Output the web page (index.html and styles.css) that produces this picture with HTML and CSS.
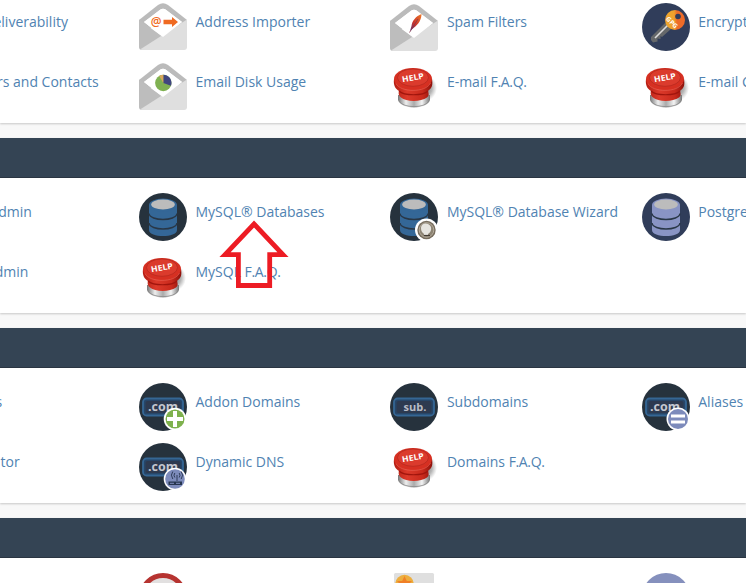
FILE: index.html
```html
<!DOCTYPE html>
<html lang="en">
<head>
<meta charset="utf-8">
<title>cPanel</title>
<link rel="stylesheet" href="styles.css">
</head>
<body>
<svg class="defs" aria-hidden="true">
  <defs>
    <linearGradient id="red" x1="0" x2="1"><stop offset="0" stop-color="#b51d12"/><stop offset=".35" stop-color="#dc3a2b"/><stop offset=".75" stop-color="#c92a1c"/><stop offset="1" stop-color="#8d120c"/></linearGradient>
    <linearGradient id="metal" x1="0" x2="1"><stop offset="0" stop-color="#777"/><stop offset=".25" stop-color="#eee"/><stop offset=".5" stop-color="#aaa"/><stop offset=".75" stop-color="#f4f4f4"/><stop offset="1" stop-color="#777"/></linearGradient>
    <radialGradient id="shade"><stop offset="0" stop-color="#666" stop-opacity=".9"/><stop offset=".6" stop-color="#888" stop-opacity=".6"/><stop offset="1" stop-color="#999" stop-opacity="0"/></radialGradient>
    <linearGradient id="key" x1="0" x2="1"><stop offset="0" stop-color="#eda62f"/><stop offset=".45" stop-color="#eea22d"/><stop offset=".6" stop-color="#ed6b28"/><stop offset="1" stop-color="#ed6b28"/></linearGradient>
    <linearGradient id="feather" x1="0" y1="1" x2="1" y2="0"><stop offset="0" stop-color="#4e3a80"/><stop offset=".4" stop-color="#c8322c"/><stop offset="1" stop-color="#ee7a28"/></linearGradient>
  </defs>
  <symbol id="envelope" viewBox="0 0 48 48">
    <path d="M0 17 19 2Q24-1.5 29 2L48 17V25H0Z" fill="#bbb"/>
    <path d="M5 19 21.5 6.5Q24 4.8 26.5 6.5L43 19 24 34Z" fill="#fff"/>
    <path d="M0 16.5 24 34 6 47H3Q0 47 0 44Z" fill="#bdbdbd"/>
    <path d="M48 16.5V44Q48 47 45 47H3L1 46.5Z" fill="#dfdfdf"/>
    <path d="M5 19 21.5 6.5Q24 4.8 26.5 6.5L43 19 24 34Z" fill="#fff"/>
  </symbol>
  <symbol id="help" viewBox="0 0 48 48">
    <ellipse cx="35" cy="25" rx="12" ry="13" fill="url(#shade)"/>
    <path d="M8 32H40V37C37 47 11 47 8 37Z" fill="url(#metal)"/>
    <path d="M9 38C13 45.5 35 45.5 39 38" fill="none" stroke="#888" stroke-width=".8"/>
    <path d="M4 16C3 23 6 26 9 28 8 31 9 33 11 34.5 16 39 31 39 37 34.5 39 33 39 31 38 28 42 25 43 22 42 16Z" fill="url(#red)"/>
    <path d="M9 28C14 33 33 33 38 28" fill="none" stroke="#a0150d" stroke-width="1.2"/>
    <ellipse cx="23" cy="16" rx="19" ry="11" fill="#d63022"/>
    <ellipse cx="23" cy="14.6" rx="15.5" ry="8.7" fill="#db3b2d" stroke="#b82a20" stroke-width=".8"/>
    <path d="M6 20.5C10 29.5 36 30 40.5 20" fill="none" stroke="#ed6557" stroke-width="1" opacity=".6"/>
    <text x="23" y="17.5" class="t-help" textLength="22" lengthAdjust="spacingAndGlyphs" transform="rotate(-10 23 15)">HELP</text>
  </symbol>
  <symbol id="cylinder" viewBox="0 0 48 48">
    <path d="M10 12V37C10 45 38 45 38 37V12Z" fill="currentColor"/>
    <ellipse cx="24" cy="12" rx="14" ry="6.5" fill="currentColor"/>
    <ellipse cx="24" cy="11.5" rx="11.8" ry="4.9" fill="#bcbcbc"/>
    <path d="M10 20.5C11 28.5 37 28.5 38 20.5M10 30C11 38 37 38 38 30" fill="none" stroke="#293746" stroke-width="1.5"/>
  </symbol>
  <symbol id="domain" viewBox="0 0 48 48">
    <circle cx="24" cy="24" r="24" fill="#26323d"/>
    <rect x="4" y="15.5" width="40" height="17" rx="3.5" fill="#274668" stroke="#356694" stroke-width="1.8"/>
    <rect x="6.5" y="18" width="35" height="12" rx="2" fill="#2d3a50"/>
  </symbol>
</svg>

<main class="page">
  <section class="panel panel-first">
    <ul class="items">
      <li class="item"><svg class="icon"><use href="#envelope"/></svg><a>Email Deliverability</a></li>
      <li class="item">
        <svg class="icon" viewBox="0 0 48 48"><use href="#envelope"/><text x="17.2" y="23" class="t-at">@</text><path d="M24.5 16.8H33V14L39 19 33 24V21.2H24.5Z" fill="#ef6a22"/></svg>
        <a>Address Importer</a></li>
      <li class="item">
        <svg class="icon" viewBox="0 0 48 48"><g transform="translate(0 1)"><use href="#envelope"/><path d="M20 27 21.5 22C22 17 26 12 31.5 10 31.5 15 29 20 23.5 24Z" fill="url(#feather)"/><path d="M19.5 28.5 28 15" stroke="#81334d" stroke-width=".8"/></g></svg>
        <a>Spam Filters</a></li>
      <li class="item">
        <svg class="icon" viewBox="0 0 48 48"><circle cx="24" cy="24" r="24" fill="#303d5a"/><path d="M23 20 29 26 20 34 18.5 33 18.5 36 15.5 35.5 15.5 38.5 11 39.5 9 37V34Z" fill="#65686a"/><path d="M13 35 26 22" stroke="#ddd" stroke-width="1.6"/><circle cx="33" cy="17" r="10" fill="url(#key)"/><circle cx="36" cy="13.5" r="2.8" fill="#303d5a"/><text x="30.5" y="22" class="t-gpg" transform="rotate(45 30.5 19)">GPG</text></svg>
        <a>Encryption</a></li>
      <li class="item"><svg class="icon"><use href="#envelope"/></svg><a>Calendars and Contacts</a></li>
      <li class="item">
        <svg class="icon" viewBox="0 0 48 48"><use href="#envelope"/><circle cx="24.3" cy="20" r="8.2" fill="#7fb151"/><path d="M24.3 20V11.8A8.2 8.2 0 0 1 32 22.8Z" fill="#40467f"/><path d="M24.3 20 20.2 12.9A8.2 8.2 0 0 1 24.3 11.8Z" fill="#d8a65b"/></svg>
        <a>Email Disk Usage</a></li>
      <li class="item"><svg class="icon"><use href="#help"/></svg><a>E-mail <span class="faq">F.A.Q.</span></a></li>
      <li class="item"><svg class="icon"><use href="#help"/></svg><a>E-mail Client</a></li>
    </ul>
  </section>

  <section class="panel">
    <header class="bar"></header>
    <ul class="items">
      <li class="item"><svg class="icon"></svg><a>phpMyAdmin</a></li>
      <li class="item">
        <svg class="icon blue" viewBox="0 0 48 48"><circle cx="24" cy="24" r="24" fill="#26323d"/><use href="#cylinder"/></svg>
        <a>MySQL® Databases</a>
        <svg class="arrow" viewBox="0 0 68 70"><path d="M34 4 63 34.7H49.7V65.5H18.4V34.7H5Z"/></svg></li>
      <li class="item">
        <svg class="icon blue" viewBox="0 0 48 48"><circle cx="24" cy="24" r="24" fill="#26323d"/><use href="#cylinder"/><circle cx="36.5" cy="37" r="11.5" fill="#fff"/><circle cx="36.5" cy="37" r="9.2" fill="#776d5e"/><circle cx="36.5" cy="37" r="7.3" fill="#8c8373" stroke="#b5ac9c" stroke-width="1"/><path d="M36 30.5C31 30.5 30 35 32 39L34 41V43H38V41C43 38 42 31 36 30.5Z" fill="#e6e4df"/><path d="M34 42.5H40" stroke="#423b32" stroke-width="1.2"/></svg>
        <a>MySQL® Database Wizard</a></li>
      <li class="item">
        <svg class="icon lilac" viewBox="0 0 48 48"><circle cx="24" cy="24" r="24" fill="#303d5a"/><use href="#cylinder"/></svg>
        <a>PostgreSQL Databases</a></li>
      <li class="item"><svg class="icon"></svg><a>phpPgAdmin</a></li>
      <li class="item"><svg class="icon"><use href="#help"/></svg><a>MySQL <span class="faq">F.A.Q.</span></a></li>
    </ul>
  </section>

  <section class="panel">
    <header class="bar"></header>
    <ul class="items">
      <li class="item"><svg class="icon"></svg><a>Domains</a></li>
      <li class="item">
        <svg class="icon" viewBox="0 0 48 48"><use href="#domain"/><text x="24" y="28" class="t-com">.com</text><circle cx="36" cy="36" r="11.3" fill="#fff"/><circle cx="36" cy="36" r="9.5" fill="#7eb14d"/><path d="M36 28V44M28 36H44" stroke="#fff" stroke-width="4"/></svg>
        <a>Addon Domains</a></li>
      <li class="item">
        <svg class="icon" viewBox="0 0 48 48"><use href="#domain"/><text x="25" y="28" class="t-sub">sub.</text></svg>
        <a>Subdomains</a></li>
      <li class="item">
        <svg class="icon" viewBox="0 0 48 48"><use href="#domain"/><text x="23" y="28" class="t-com">.com</text><circle cx="36" cy="36" r="11.5" fill="#fff"/><circle cx="36" cy="36" r="10" fill="#7d8bbb"/><path d="M29 33H43M29 39H43" stroke="#fff" stroke-width="2.8"/></svg>
        <a>Aliases</a></li>
      <li class="item"><svg class="icon"></svg><a>Zone Editor</a></li>
      <li class="item">
        <svg class="icon" viewBox="0 0 48 48"><use href="#domain"/><text x="24" y="28" class="t-com">.com</text><circle cx="36" cy="36" r="11.3" fill="#fff"/><circle cx="36" cy="36" r="9.8" fill="#7d8bbb"/><path d="M29.5 38.5H43V42H29.5Z" fill="#273650"/><path d="M31 40.3H35M37 40.3H41" stroke="#8290be" stroke-width="1"/><path d="M38 32V38M35.8 34.5Q34.2 32.3 35.8 30M40.2 34.5Q41.8 32.3 40.2 30M33.8 36Q31 32 33.8 28.5M42.2 36Q45 32 42.2 28.5" fill="none" stroke="#303d5a" stroke-width="1"/></svg>
        <a>Dynamic DNS</a></li>
      <li class="item"><svg class="icon"><use href="#help"/></svg><a>Domains <span class="faq">F.A.Q.</span></a></li>
    </ul>
  </section>

  <section class="panel">
    <header class="bar"></header>
    <ul class="items">
      <li class="item"></li>
      <li class="item"><svg class="icon" viewBox="0 0 48 48"><circle cx="24" cy="24" r="21.5" fill="#e2e0e0" stroke="#b63330" stroke-width="5"/></svg></li>
      <li class="item"><svg class="icon" viewBox="0 0 48 48"><rect x="4" width="40" height="48" rx="1.5" fill="#dfdfdf"/><circle cx="14.5" cy="11" r="9.2" fill="#edae3e"/><path d="M14.5 3 16.8 8H22L18 12 20 18H9L11 12 7 8H12.2Z" fill="#f08027"/></svg></li>
      <li class="item"><svg class="icon" viewBox="0 0 48 48"><circle cx="24" cy="24" r="24" fill="#8590bd"/></svg></li>
    </ul>
  </section>
</main>
</body>
</html>
```

FILE: styles.css
```css
* {
  box-sizing: border-box;
}

body {
  margin: 0;
  background: #f8f8f8;
  font: 14px/20px "Open Sans", sans-serif;
  color: #5083b2;
}

.defs {
  display: block;
  width: 0;
  height: 0;
}

.page {
  height: 583px;
  overflow: hidden;
}

.panel {
  height: 175px;
  margin-bottom: 15px;
  background: #fff;
  box-shadow: 0 1px 2px rgba(0, 0, 0, .2);
}

.panel-first {
  height: 123px;
}

.bar {
  height: 40px;
  background: #344454;
  border-bottom: 1px solid #2a3542;
}

.items {
  display: grid;
  grid-template-columns: repeat(4, 251.4px);
  grid-auto-rows: 60px;
  margin: 0 0 0 -112.6px;
  padding: 15px 0 0;
  list-style: none;
}

.panel-first .items {
  padding-top: 3px;
}

.item {
  position: relative;
  display: flex;
  gap: 8.7px;
  white-space: nowrap;
}

.item a {
  padding-top: 9px;
}

.faq {
  letter-spacing: -.35px;
}

.icon {
  flex: none;
  width: 48px;
  height: 48px;
}

.blue {
  color: #346797;
}

.lilac {
  color: #8994c4;
}

/* Callout arrow pointing at the databases link */
.arrow {
  position: absolute;
  left: 81px;
  top: 27px;
  z-index: 2;
  width: 68px;
  height: 70px;
  overflow: visible;
}

.arrow path {
  fill: none;
  stroke: #ed1c24;
  stroke-width: 4.8;
}

text {
  text-anchor: middle;
  font-family: "Open Sans", sans-serif;
  font-weight: 700;
}

.t-help {
  font-size: 8px;
  fill: #fff;
}

.t-at {
  font-size: 12px;
  font-weight: 600;
  fill: #ef6a22;
}

.t-gpg {
  font-size: 6.5px;
  fill: #fff;
}

.t-com {
  font-size: 12.5px;
  fill: #c5c8d0;
}

.t-sub {
  font-size: 11px;
  fill: #b9bdc6;
}
```
